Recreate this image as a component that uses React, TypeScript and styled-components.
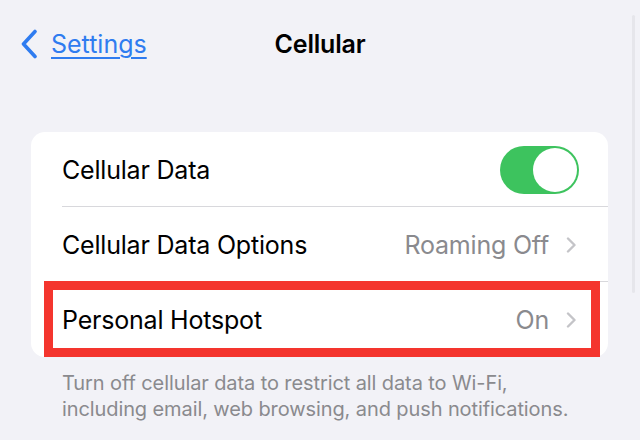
import styled, { createGlobalStyle } from "styled-components";

const GlobalStyle = createGlobalStyle`
  html, body {
    margin: 0;
    padding: 0;
    background: #f2f2f7;
  }
  body {
    font-family: Inter, "Noto Sans", "Liberation Sans", sans-serif;
    -webkit-font-smoothing: antialiased;
  }
`;

const Page = styled.div`
  position: relative;
  width: 640px;
  height: 440px;
  overflow: hidden;
  background: #f2f2f7;
`;

const NavBar = styled.div`
  position: relative;
  height: 88px;
  display: flex;
  align-items: center;
  justify-content: center;
`;

const Back = styled.a`
  position: absolute;
  left: 20px;
  top: 29px;
  display: flex;
  align-items: center;
  gap: 13px;
  color: #2f7cf0;
  font-size: 25px;
  text-decoration: underline;
  text-decoration-thickness: 1.5px;
  text-underline-offset: 4px;
  cursor: pointer;
`;

const Title = styled.div`
  font-size: 25px;
  font-weight: 600;
  color: #000;
  letter-spacing: -0.2px;
`;

const Card = styled.div`
  margin: 44px 32px 0 31px;
  background: #fff;
  border-radius: 14px;
`;

const Row = styled.div<{ $last?: boolean }>`
  position: relative;
  height: 75px;
  display: flex;
  align-items: center;
  justify-content: space-between;
  padding-left: 31px;
  padding-right: 29px;
  &::after {
    content: "";
    display: ${(p) => (p.$last ? "none" : "block")};
    position: absolute;
    left: 31px;
    right: 0;
    bottom: 0;
    height: 1px;
    background: #d8d8dc;
  }
`;

const Label = styled.span`
  font-size: 25px;
  color: #000;
  letter-spacing: -0.2px;
`;

const Detail = styled.span`
  display: flex;
  align-items: center;
  gap: 17px;
  font-size: 25px;
  color: #8a8a8e;
  letter-spacing: -0.2px;
  padding-right: 2px;
`;

const Toggle = styled.div<{ $on: boolean }>`
  width: 79px;
  height: 48px;
  border-radius: 24px;
  background: ${(p) => (p.$on ? "#3dc35e" : "#e9e9eb")};
  display: flex;
  align-items: center;
  justify-content: ${(p) => (p.$on ? "flex-end" : "flex-start")};
  padding: 0 2px;
  box-sizing: border-box;
`;

const Knob = styled.div`
  width: 44px;
  height: 44px;
  border-radius: 50%;
  background: #fff;
`;

const Highlight = styled.div`
  position: absolute;
  left: 13px;
  right: 8px;
  top: -1px;
  bottom: 0;
  border: 9px solid #f4352e;
`;

const Footer = styled.p`
  margin: 13px 0 0 62px;
  width: 525px;
  font-size: 20px;
  line-height: 26px;
  color: #8a8a8e;
  letter-spacing: -0.1px;
`;

const ScrollIndicator = styled.div`
  position: absolute;
  right: 5px;
  top: 15px;
  width: 3px;
  height: 278px;
  border-radius: 2px;
  background: #e6e6eb;
`;

function BackChevron() {
  return (
    <svg width="18" height="30" viewBox="0 0 18 30">
      <path
        d="M15 2.5 L3.5 15 L15 27.5"
        fill="none"
        stroke="#2f7cf0"
        strokeWidth="3.6"
        strokeLinecap="round"
        strokeLinejoin="round"
      />
    </svg>
  );
}

function Chevron() {
  return (
    <svg width="11" height="16" viewBox="0 0 11 16">
      <path
        d="M2 1.5 L8.5 8 L2 14.5"
        fill="none"
        stroke="#c4c4c8"
        strokeWidth="2.4"
        strokeLinecap="round"
        strokeLinejoin="round"
      />
    </svg>
  );
}

export default function App() {
  return (
    <>
      <GlobalStyle />
      <Page>
        <NavBar>
          <Back>
            <BackChevron />
            Settings
          </Back>
          <Title>Cellular</Title>
        </NavBar>
        <Card>
          <Row>
            <Label>Cellular Data</Label>
            <Toggle $on>
              <Knob />
            </Toggle>
          </Row>
          <Row>
            <Label>Cellular Data Options</Label>
            <Detail>
              Roaming Off
              <Chevron />
            </Detail>
          </Row>
          <Row $last>
            <Label>Personal Hotspot</Label>
            <Detail>
              On
              <Chevron />
            </Detail>
            <Highlight />
          </Row>
        </Card>
        <Footer>
          Turn off cellular data to restrict all data to Wi-Fi, including email, web browsing, and push
          notifications.
        </Footer>
        <ScrollIndicator />
      </Page>
    </>
  );
}
